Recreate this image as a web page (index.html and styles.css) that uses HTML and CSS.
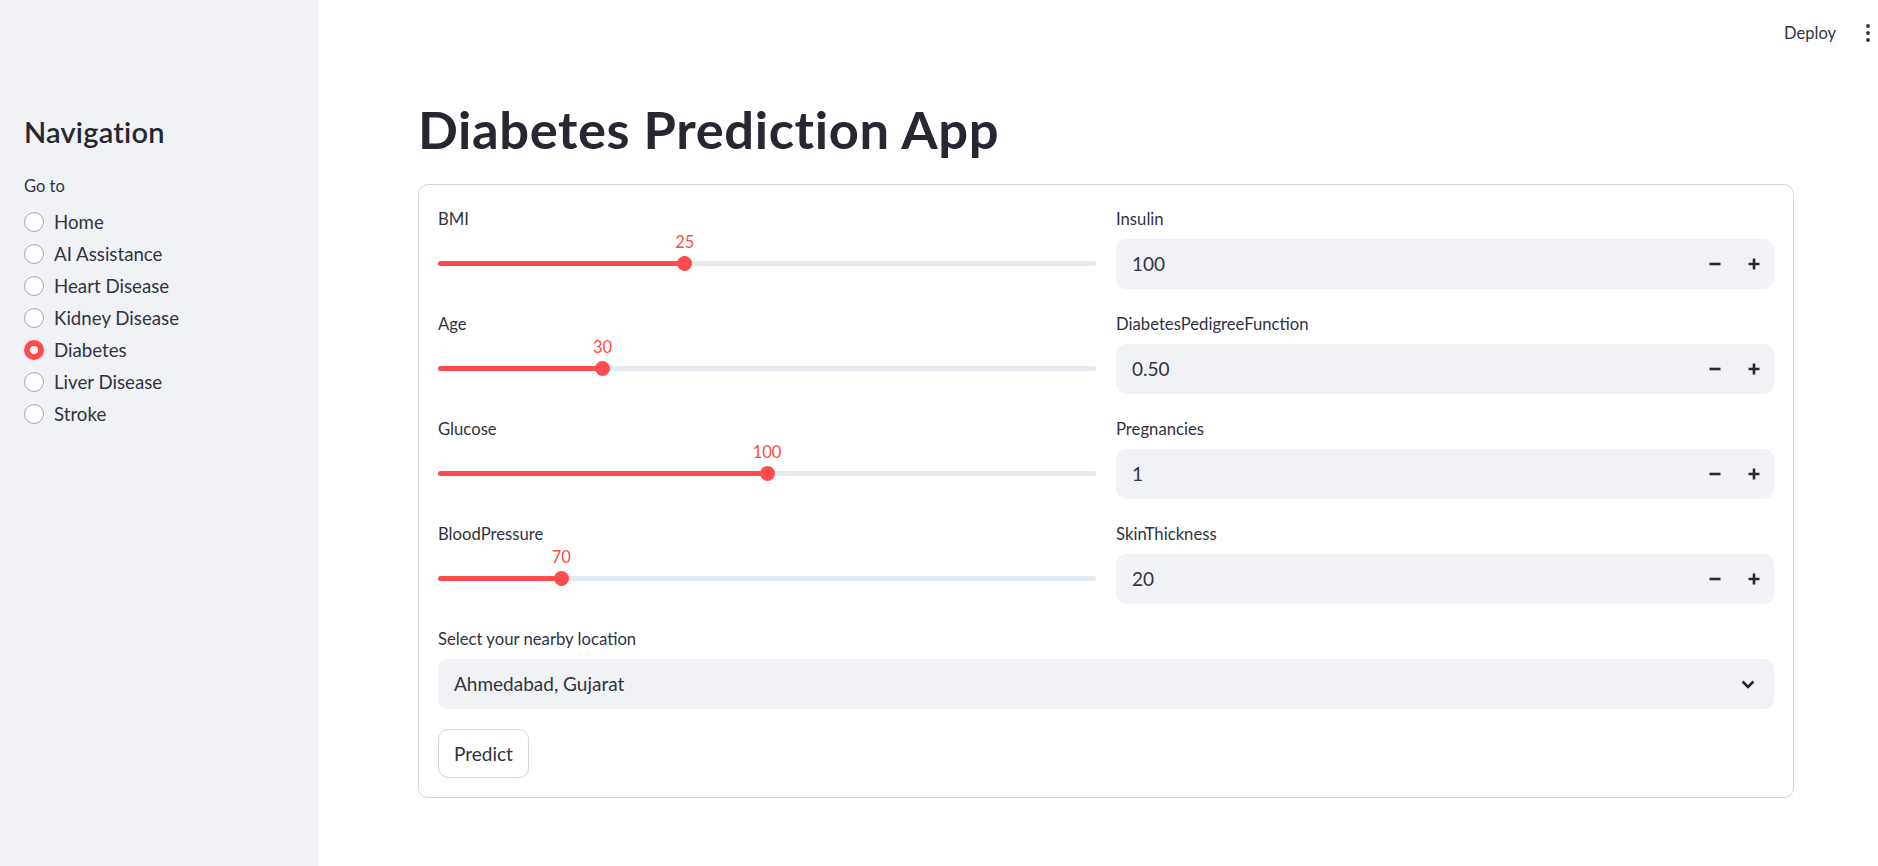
FILE: index.html
```html
<!DOCTYPE html>
<html lang="en">
<head>
<meta charset="utf-8">
<title>Diabetes Prediction App</title>
<link rel="stylesheet" href="styles.css">
</head>
<body>
<div class="app">
  <aside class="sidebar">
    <h2 class="nav-title">Navigation</h2>
    <div class="radio-caption">Go to</div>
    <div class="radio-group">
      <div class="radio"><span class="circle"></span><span class="radio-text">Home</span></div>
      <div class="radio"><span class="circle"></span><span class="radio-text">AI Assistance</span></div>
      <div class="radio"><span class="circle"></span><span class="radio-text">Heart Disease</span></div>
      <div class="radio"><span class="circle"></span><span class="radio-text">Kidney Disease</span></div>
      <div class="radio checked"><span class="circle"></span><span class="radio-text">Diabetes</span></div>
      <div class="radio"><span class="circle"></span><span class="radio-text">Liver Disease</span></div>
      <div class="radio"><span class="circle"></span><span class="radio-text">Stroke</span></div>
    </div>
  </aside>
  <main class="main">
    <header class="topbar">
      <span class="deploy">Deploy</span>
      <span class="kebab">
        <svg width="6" height="20" viewBox="0 0 6 20"><circle cx="3" cy="3" r="1.9" fill="#31333F"/><circle cx="3" cy="10" r="1.9" fill="#31333F"/><circle cx="3" cy="17" r="1.9" fill="#31333F"/></svg>
      </span>
    </header>
    <div class="content">
      <h1 class="title">Diabetes Prediction App</h1>
      <div class="card">
        <div class="columns">
          <div class="column">
            <div class="widget">
              <div class="label">BMI</div>
              <div class="slider" style="--p: 37.5%">
                <div class="track"><div class="fill"></div></div>
                <div class="thumb"></div>
                <div class="thumb-value">25</div>
              </div>
            </div>
            <div class="widget">
              <div class="label">Age</div>
              <div class="slider" style="--p: 25%">
                <div class="track"><div class="fill"></div></div>
                <div class="thumb"></div>
                <div class="thumb-value">30</div>
              </div>
            </div>
            <div class="widget">
              <div class="label">Glucose</div>
              <div class="slider" style="--p: 50%">
                <div class="track"><div class="fill"></div></div>
                <div class="thumb"></div>
                <div class="thumb-value">100</div>
              </div>
            </div>
            <div class="widget">
              <div class="label">BloodPressure</div>
              <div class="slider" style="--p: 18.75%">
                <div class="track"><div class="fill"></div></div>
                <div class="thumb"></div>
                <div class="thumb-value">70</div>
              </div>
            </div>
          </div>
          <div class="column">
            <div class="widget">
              <div class="label">Insulin</div>
              <div class="number-input">
                <span class="number-value">100</span>
                <span class="step"><svg width="12" height="12" viewBox="0 0 12 12"><path d="M0.5 6H11.5" stroke="#262730" stroke-width="2.6"/></svg></span>
                <span class="step"><svg width="12" height="12" viewBox="0 0 12 12"><path d="M0.5 6H11.5M6 0.5V11.5" stroke="#262730" stroke-width="2.6"/></svg></span>
              </div>
            </div>
            <div class="widget">
              <div class="label">DiabetesPedigreeFunction</div>
              <div class="number-input">
                <span class="number-value">0.50</span>
                <span class="step"><svg width="12" height="12" viewBox="0 0 12 12"><path d="M0.5 6H11.5" stroke="#262730" stroke-width="2.6"/></svg></span>
                <span class="step"><svg width="12" height="12" viewBox="0 0 12 12"><path d="M0.5 6H11.5M6 0.5V11.5" stroke="#262730" stroke-width="2.6"/></svg></span>
              </div>
            </div>
            <div class="widget">
              <div class="label">Pregnancies</div>
              <div class="number-input">
                <span class="number-value">1</span>
                <span class="step"><svg width="12" height="12" viewBox="0 0 12 12"><path d="M0.5 6H11.5" stroke="#262730" stroke-width="2.6"/></svg></span>
                <span class="step"><svg width="12" height="12" viewBox="0 0 12 12"><path d="M0.5 6H11.5M6 0.5V11.5" stroke="#262730" stroke-width="2.6"/></svg></span>
              </div>
            </div>
            <div class="widget">
              <div class="label">SkinThickness</div>
              <div class="number-input">
                <span class="number-value">20</span>
                <span class="step"><svg width="12" height="12" viewBox="0 0 12 12"><path d="M0.5 6H11.5" stroke="#262730" stroke-width="2.6"/></svg></span>
                <span class="step"><svg width="12" height="12" viewBox="0 0 12 12"><path d="M0.5 6H11.5M6 0.5V11.5" stroke="#262730" stroke-width="2.6"/></svg></span>
              </div>
            </div>
          </div>
        </div>
        <div class="widget">
          <div class="label">Select your nearby location</div>
          <div class="select">
            <span class="select-value">Ahmedabad, Gujarat</span>
            <svg class="chevron" width="14" height="9" viewBox="0 0 14 9"><path d="M1.5 1.5L7 7L12.5 1.5" fill="none" stroke="#262730" stroke-width="2.6"/></svg>
          </div>
        </div>
        <div class="button-row">
          <button class="btn" type="button">Predict</button>
        </div>
      </div>
    </div>
  </main>
</div>
</body>
</html>
```

FILE: styles.css
```css
* { box-sizing: border-box; }

html, body {
  margin: 0;
  padding: 0;
  height: 100%;
  overflow: hidden;
  background: #ffffff;
}

body {
  font-family: Lato, "Noto Sans", sans-serif;
  color: #31333F;
}

.app {
  display: flex;
  height: 866px;
}

/* ---------- Sidebar ---------- */
.sidebar {
  width: 318px;
  flex: 0 0 318px;
  background: #F0F2F6;
  padding: 115px 24px 0 24px;
}

.nav-title {
  margin: 0;
  font-size: 29px;
  line-height: 34px;
  font-weight: 600;
  letter-spacing: 0.2px;
  color: #262730;
}

.radio-caption {
  margin-top: 25px;
  font-size: 16.5px;
  line-height: 24px;
}

.radio-group {
  margin-top: 8px;
  display: flex;
  flex-direction: column;
}

.radio {
  height: 32px;
  display: flex;
  align-items: center;
  gap: 10px;
}

.circle {
  width: 20px;
  height: 20px;
  border-radius: 50%;
  border: 1px solid #a6a8b0;
  background: #ffffff;
  flex: 0 0 20px;
}

.radio.checked .circle {
  border: 6.5px solid #FF4B4B;
  background: #ffffff;
}

.radio-text {
  font-size: 18.7px;
  line-height: 24px;
}

/* ---------- Main ---------- */
.main {
  flex: 1;
  display: flex;
  flex-direction: column;
  min-width: 0;
}

.topbar {
  height: 66px;
  display: flex;
  justify-content: flex-end;
  align-items: center;
  padding-right: 7px;
  gap: 29px;
}

.deploy {
  font-size: 16.5px;
  line-height: 20px;
}

.kebab {
  display: flex;
  align-items: center;
}

.content {
  padding: 32px 84px 0 100px;
}

.title {
  margin: 0 0 24px 0;
  font-size: 52.5px;
  line-height: 62px;
  font-weight: 700;
  letter-spacing: 0.6px;
  color: #262730;
}

.card {
  border: 1px solid #D6D6D9;
  border-radius: 10px;
  padding: 19px;
  display: flex;
  flex-direction: column;
  gap: 20px;
}

.columns {
  display: grid;
  grid-template-columns: 1fr 1fr;
  gap: 20px;
}

.column {
  display: flex;
  flex-direction: column;
  gap: 20px;
}

.widget {
  display: flex;
  flex-direction: column;
}

.label {
  height: 30px;
  margin-bottom: 5px;
  display: flex;
  align-items: center;
  font-size: 16.7px;
}

/* Slider */
.slider {
  position: relative;
  height: 50px;
}

.track {
  position: absolute;
  left: 0;
  right: 0;
  top: 22px;
  height: 5px;
  border-radius: 3px;
  background: #E5E9F0;
  overflow: hidden;
}

.fill {
  width: var(--p);
  height: 100%;
  background: #FF4B4B;
}

.thumb {
  position: absolute;
  top: 17px;
  left: calc(var(--p) - 7.5px);
  width: 15px;
  height: 15px;
  border-radius: 50%;
  background: #FF4B4B;
}

.thumb-value {
  position: absolute;
  top: -7px;
  left: var(--p);
  transform: translateX(-50%);
  font-size: 16.5px;
  line-height: 20px;
  color: #FF4B4B;
}

/* Number input */
.number-input {
  height: 50px;
  border-radius: 10px;
  background: #F0F2F6;
  display: flex;
  align-items: center;
  padding: 0 1px 0 16px;
}

.number-value {
  flex: 1;
  font-size: 19px;
  line-height: 24px;
  padding-bottom: 1px;
}

.step {
  width: 39px;
  height: 100%;
  display: flex;
  align-items: center;
  justify-content: center;
}

/* Select */
.select {
  height: 50px;
  border-radius: 10px;
  background: #F0F2F6;
  display: flex;
  align-items: center;
  justify-content: space-between;
  padding: 0 19px 0 16px;
}

.select-value {
  font-size: 19px;
  line-height: 24px;
  padding-bottom: 1px;
}

/* Button */
.button-row {
  display: flex;
}

.btn {
  height: 49px;
  padding: 0 15px;
  border: 1px solid #D6D6D9;
  border-radius: 10px;
  background: #ffffff;
  font-family: Lato, "Noto Sans", sans-serif;
  font-size: 19px;
  color: #31333F;
}
```
